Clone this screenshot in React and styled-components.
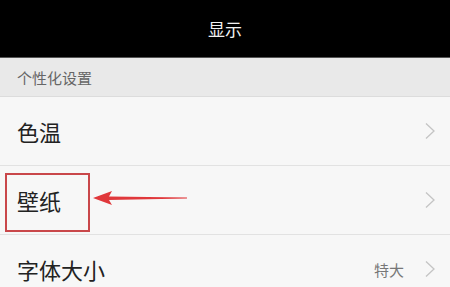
import React from 'react';
import styled, { createGlobalStyle } from 'styled-components';

const GlobalStyle = createGlobalStyle`
  html, body {
    margin: 0;
    padding: 0;
    background: #f7f7f7;
    font-family: "Noto Sans CJK SC", "Noto Sans", sans-serif;
  }
`;

// whole screen
const Screen = styled.div`
  width: 450px;
  height: 287px;
  overflow: hidden;
  background: #f7f7f7;
`;

// black title bar
const TitleBar = styled.div`
  height: 58px;
  background: #000;
  display: flex;
  align-items: center;
  justify-content: center;
  color: #f2f2f2;
  font-size: 17px;
  border-bottom: 1px solid #555;
  box-sizing: border-box;
`;

// section label band
const SectionHeader = styled.div`
  height: 38px;
  background: #e9e9e9;
  display: flex;
  align-items: center;
  padding: 0 0 0 17px;
  color: #666;
  font-size: 15px;
  border-bottom: 1px solid #dcdcdc;
`;

// settings row
const Row = styled.div`
  position: relative;
  height: 68px;
  display: flex;
  align-items: center;
  padding: 0 14px 0 17px;
  border-bottom: 1px solid #e2e2e2;
  background: #f7f7f7;
`;

const Label = styled.span`
  flex: 1;
  font-size: 22px;
  color: #222;
`;

const Value = styled.span`
  font-size: 15px;
  color: #777;
  margin: 0 20px 0 0;
`;

// red annotation over the wallpaper row
const Highlight = styled.div`
  position: absolute;
  left: 5px;
  top: 7px;
  width: 85px;
  height: 59px;
  border: 2.5px solid #c9474a;
  box-sizing: border-box;
`;

const ArrowMark = styled.svg`
  position: absolute;
  left: 92px;
  top: 24px;
`;

const Chevron = () => (
  <svg width="12" height="18" viewBox="0 0 12 18">
    <path d="M2 1.5 L10 9 L2 16.5" fill="none" stroke="#c4c4c4" strokeWidth="1.3" />
  </svg>
);

const Arrow = () => (
  <ArrowMark width="96" height="18" viewBox="0 0 96 18">
    <path d="M1 8 L20 1 L17 6.5 L95 7.5 L95 8.5 L17 10 L20 15 Z" fill="#e0383b" />
  </ArrowMark>
);

const App = () => {
  return (
    <Screen>
      <GlobalStyle />
      <TitleBar>显示</TitleBar>
      <SectionHeader>个性化设置</SectionHeader>
      <Row>
        <Label>色温</Label>
        <Chevron />
      </Row>
      <Row>
        <Label>壁纸</Label>
        <Chevron />
        <Highlight />
        <Arrow />
      </Row>
      <Row>
        <Label>字体大小</Label>
        <Value>特大</Value>
        <Chevron />
      </Row>
    </Screen>
  );
};

export default App;
